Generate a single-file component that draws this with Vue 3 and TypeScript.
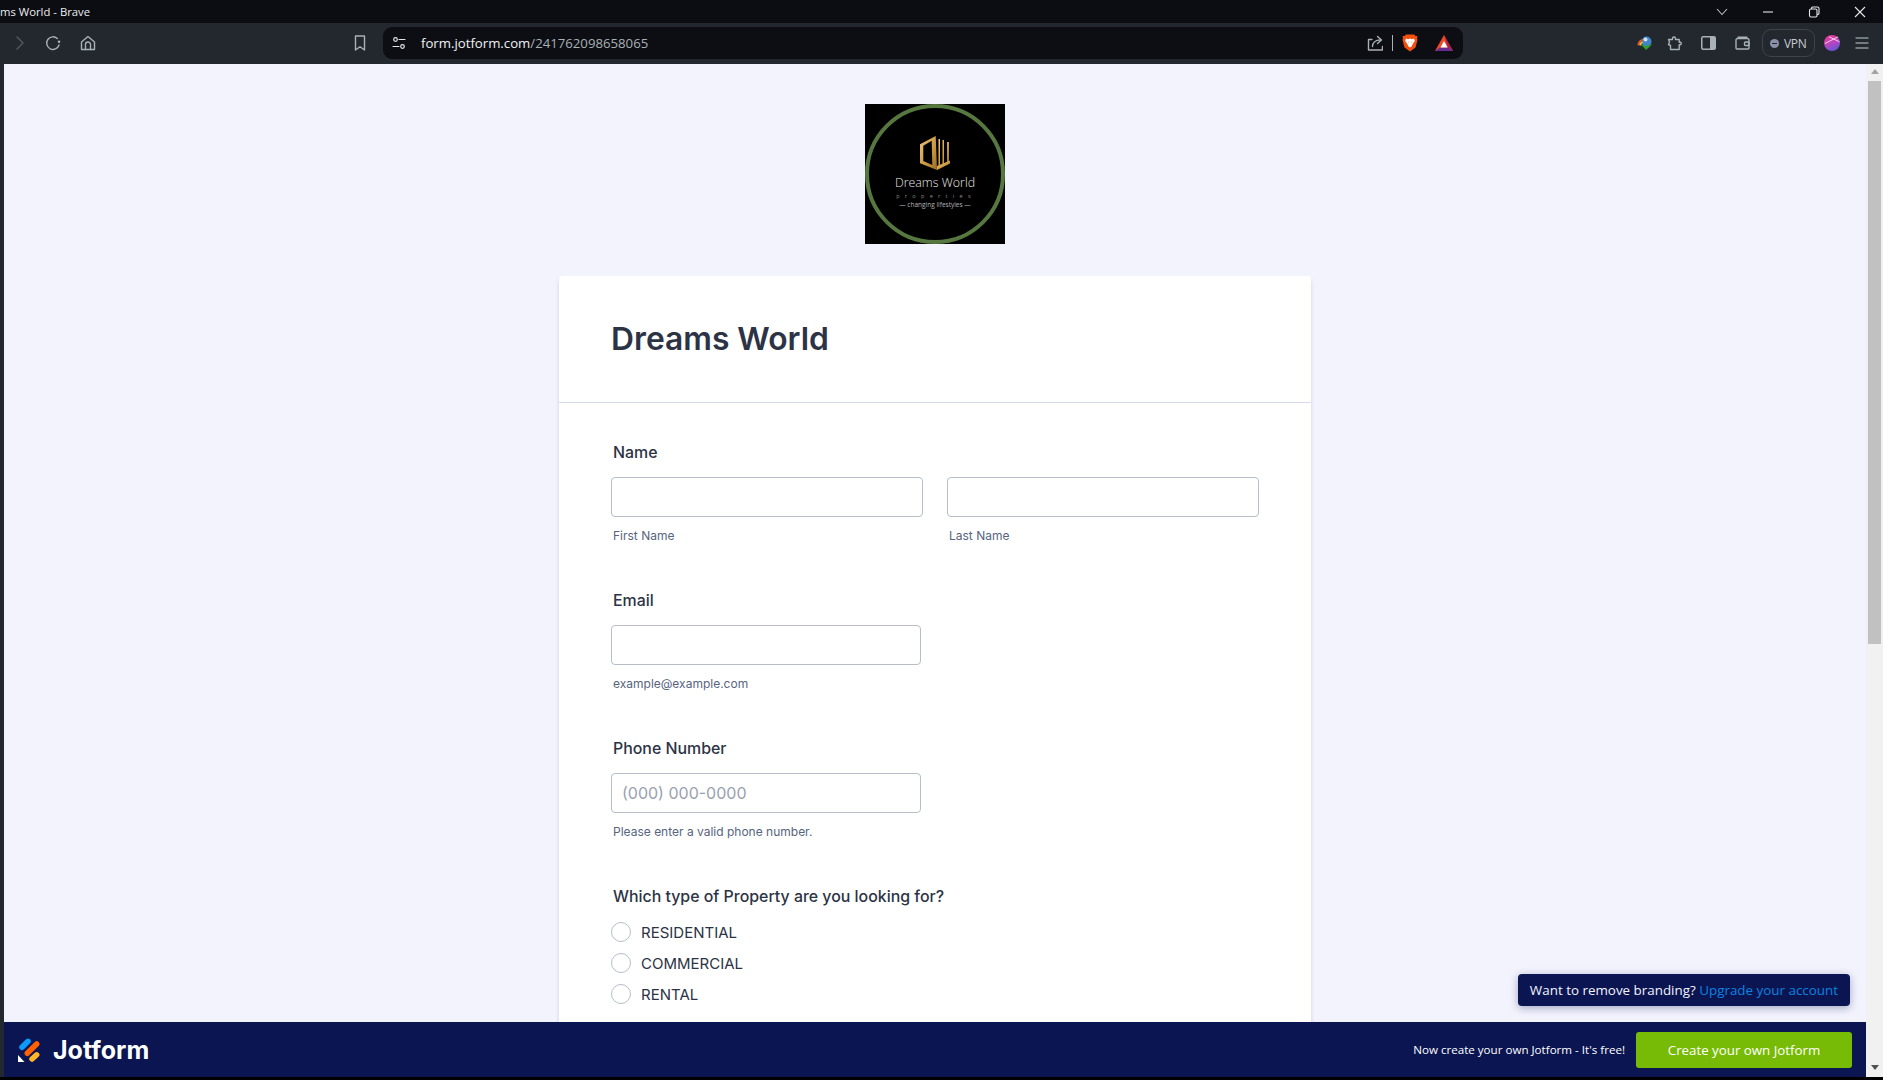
<template>
  <div class="window">
    <!-- Browser title bar -->
    <header class="titlebar">
      <span class="titlebar__title">ms World - Brave</span>
      <div class="titlebar__controls">
        <svg width="12" height="8" viewBox="0 0 12 8" class="ctl ctl--tabs"><path d="M1 1l5 5.500L11 1" /></svg>
        <svg width="12" height="12" viewBox="0 0 12 12" class="ctl"><path d="M1 6h10" /></svg>
        <svg width="12" height="12" viewBox="0 0 12 12" class="ctl"><rect x="1.500" y="3" width="7.500" height="8" rx="1.500" /><path d="M3.500 3V2.200Q3.500 1 4.700 1H9.500Q11 1 11 2.500V7.500Q11 8.500 9 8.500" /></svg>
        <svg width="12" height="12" viewBox="0 0 12 12" class="ctl"><path d="M1 1l10 10M11 1L1 11" /></svg>
      </div>
    </header>

    <!-- Browser toolbar -->
    <nav class="toolbar">
      <div class="toolbar__nav">
        <svg width="10" height="14" viewBox="0 0 10 14" class="ico ico--dim"><path d="M2 1l6 6-6 6" /></svg>
        <svg width="16" height="16" viewBox="0 0 16 16" class="ico"><path d="M12.300 3.500A6.300 6.300 0 1 0 14 10" /><circle cx="14" cy="6.800" r="1.300" fill="#a9b0b6" stroke="none" /></svg>
        <svg width="16" height="16" viewBox="0 0 16 16" class="ico"><path d="M1.500 14.500V7L8 1.500 14.500 7v7.500z" /><path d="M5.500 14.500V9.500a2.500 2.500 0 0 1 5 0v5" /></svg>
      </div>
      <svg width="12" height="16" viewBox="0 0 12 16" class="ico toolbar__bookmark"><path d="M1.500 1h9v14L6 11.800 1.500 15z" /></svg>
      <div class="urlbar">
        <svg width="14" height="14" viewBox="0 0 14 14" class="ico ico--light urlbar__tune"><circle cx="3.500" cy="3.500" r="1.800" /><path d="M7 3.500h6M1 10.500h6" /><circle cx="10.500" cy="10.500" r="1.800" /></svg>
        <span class="urlbar__url">form.jotform.com<span class="urlbar__path">/241762098658065</span></span>
        <div class="urlbar__end">
          <svg width="16" height="16" viewBox="0 0 16 16" class="ico"><path d="M5 4.500H1.500v10.500h14v-3.500" /><path d="M5.500 11.500C5.500 7.500 8.500 5 13.500 5" /><path d="M10.500 1.500L14.500 5l-4 3.500" /></svg>
          <span class="urlbar__sep"></span>
          <svg width="16" height="18" viewBox="0 0 16 18">
            <path d="M4 0.500h8l1.500 1.500 2 0-.5 2 .5 2-2 7.500-5.500 4-5.500-4-2-7.500.5-2-.5-2 2 0z" fill="#f1500f" />
            <path d="M4 4.500l2 .7 2-.7 2 .7 2-.7.800 2.500L11 9.500l-1.500 3L8 13.500l-1.500-1L5 9.500 3.200 7z" fill="#fff" />
            <path d="M5.500 7.500l1.500.4v.8zM10.500 7.500L9 7.900v.8z" fill="#f1500f" />
          </svg>
          <svg width="18" height="16" viewBox="0 0 18 16" class="urlbar__bat">
            <path d="M9 0L18 16H0z" fill="#ef4a24" />
            <path d="M9 0L18 16l-5-3.500z" fill="#a3204f" />
            <path d="M0 16l5-3.500h8L18 16z" fill="#662d91" />
            <path d="M9 6l3.500 6.500h-7z" fill="#fff" />
          </svg>
        </div>
      </div>
      <div class="ext">
        <svg width="16" height="14" viewBox="0 0 16 14" class="ext__idm">
          <circle cx="9.500" cy="5.500" r="5" fill="#3f86c9" />
          <circle cx="8.500" cy="3.500" r="2" fill="#cfe3f2" />
          <path d="M0.500 9.500a6 6 0 0 1 5-6.500l1 1.500a4 4 0 0 0-3.500 4.500z" fill="#e4572e" />
          <path d="M2.500 9.500a4 4 0 0 1 2.500-4l1 1a3 3 0 0 0-1.500 3z" fill="#e8c53a" />
          <path d="M4 8.500l6 1.500 5.500-2L9 14z" fill="#32a02c" />
        </svg>
        <svg width="16" height="15" viewBox="0 0 16 15" class="ico ext__puzzle"><path d="M1.500 3.500H5.500V2.500a1.500 1.500 0 0 1 3 0V3.500H12.200V6.200H13.500a1.500 1.500 0 0 1 0 2.600H12.200V13.500H3.500V9.500L1.500 8.500l1-2.500z" /></svg>
        <svg width="15" height="14" viewBox="0 0 15 14" class="ext__panel"><rect x="0.750" y="0.750" width="13.500" height="12.500" rx="1.500" fill="none" stroke="#a9b0b6" stroke-width="1.500" /><rect x="9" y="1" width="5.500" height="12" fill="#a9b0b6" /></svg>
        <svg width="15" height="14" viewBox="0 0 15 14" class="ico ext__wallet"><path d="M3 1.200h9M1 4a1.500 1.500 0 0 1 1.500-1.500h10A1.500 1.500 0 0 1 14 4v8a1 1 0 0 1-1 1H2a1 1 0 0 1-1-1z" /><rect x="9.500" y="6" width="4.500" height="3.500" rx="1" /></svg>
        <div class="vpn">
          <span class="vpn__dot"></span>
          <span>VPN</span>
        </div>
        <svg width="16" height="16" viewBox="0 0 16 16" class="ext__avatar">
          <defs>
            <linearGradient id="avatarGrad" x1="0.300" y1="0" x2="0.700" y2="1">
              <stop offset="0" stop-color="#ee3a94" />
              <stop offset="0.550" stop-color="#b046c4" />
              <stop offset="1" stop-color="#5b58d8" />
            </linearGradient>
          </defs>
          <circle cx="8" cy="8" r="8" fill="url(#avatarGrad)" />
          <path d="M1 8.500L14 1.800M5 1.800L15.500 6.800" fill="none" stroke="#f8dcec" stroke-width="0.900" />
        </svg>
        <svg width="14" height="12" viewBox="0 0 14 12" class="ico ico--flat ext__menu"><path d="M0.500 1h13M0.500 6h13M0.500 11h13" /></svg>
      </div>
    </nav>

    <div class="viewport">
      <div class="page">
        <main class="page__scroll">
          <div class="logo">
            <svg viewBox="0 0 140 140" width="140" height="140">
              <rect width="140" height="140" fill="#000" />
              <circle cx="70" cy="70" r="68" fill="none" stroke="#56773f" stroke-width="4" />
              <defs>
                <linearGradient id="gold" x1="0" y1="0" x2="1" y2="1">
                  <stop offset="0" stop-color="#eec579" />
                  <stop offset="0.600" stop-color="#c8963f" />
                  <stop offset="1" stop-color="#9a6a22" />
                </linearGradient>
              </defs>
              <path d="M55 40.300L70.700 32 72 66 55 59.300zM58.300 41.700V57l9 4-.6-24.300z" fill="url(#gold)" fill-rule="evenodd" />
              <path d="M73.500 35H75V63.500H73.500zM77.500 36H79V61H77.500zM82 38h2V58.500H82z" fill="url(#gold)" />
              <path d="M72 66L85 59.500V56.500L72 62z" fill="url(#gold)" />
              <text x="70" y="83" class="logo__name">Dreams World</text>
              <text x="71" y="93.500" class="logo__sub">properties</text>
              <text x="70" y="102.500" class="logo__tag">— changing lifestyles —</text>
            </svg>
          </div>

          <section class="card">
            <div class="card__header">
              <h1 class="card__title">Dreams World</h1>
            </div>
            <form class="card__body" @submit.prevent>
              <div class="field">
                <label class="field__label">Name</label>
                <div class="field__row">
                  <div class="field__col">
                    <input class="field__input" type="text" />
                    <span class="field__sub">First Name</span>
                  </div>
                  <div class="field__col">
                    <input class="field__input" type="text" />
                    <span class="field__sub">Last Name</span>
                  </div>
                </div>
              </div>

              <div class="field">
                <label class="field__label">Email</label>
                <div class="field__col field__col--single">
                  <input class="field__input" type="text" />
                  <span class="field__sub">example@example.com</span>
                </div>
              </div>

              <div class="field">
                <label class="field__label">Phone Number</label>
                <div class="field__col field__col--single">
                  <input class="field__input" type="text" placeholder="(000) 000-0000" />
                  <span class="field__sub">Please enter a valid phone number.</span>
                </div>
              </div>

              <div class="field">
                <label class="field__label">Which type of Property are you looking for?</label>
                <div class="radios">
                  <div v-for="opt in propertyTypes" :key="opt" class="radio">
                    <span class="radio__mark"></span>
                    <span>{{ opt }}</span>
                  </div>
                </div>
              </div>
            </form>
          </section>
        </main>

        <div class="toast">
          <span class="toast__text">Want to remove branding?</span> <span class="toast__link">Upgrade your account</span>
        </div>

        <footer class="brandbar">
          <div class="brandbar__logo">
            <svg width="22" height="24" viewBox="0 0 22 24">
              <path d="M4 9.300L10 3.300" stroke="#0a9bff" stroke-width="5.500" stroke-linecap="round" />
              <path d="M9.300 15.300L18.700 6" stroke="#ff6100" stroke-width="5.500" stroke-linecap="round" />
              <path d="M14 21L18.700 16.800" stroke="#ffb629" stroke-width="5.500" stroke-linecap="round" />
              <path d="M0 17v7h6.500z" fill="#fff" />
            </svg>
            <span class="brandbar__name">Jotform</span>
          </div>
          <div class="brandbar__cta">
            <span class="brandbar__note">Now create your own Jotform - It's free!</span>
            <span class="brandbar__btn">Create your own Jotform</span>
          </div>
        </footer>
      </div>

      <!-- Fake page scrollbar -->
      <div class="scrollbar">
        <span class="scrollbar__up"></span>
        <span class="scrollbar__thumb"></span>
        <span class="scrollbar__down"></span>
      </div>
    </div>
    <div class="bottom-edge"></div>
  </div>
</template>

<script setup lang="ts">
const propertyTypes: string[] = ['RESIDENTIAL', 'COMMERCIAL', 'RENTAL'];
</script>

<style>
html,
body {
  margin: 0;
  overflow: hidden;
  background: #22282e;
}
</style>

<style scoped>
.window {
  display: flex;
  flex-direction: column;
  width: 1883px;
  height: 1080px;
  overflow: hidden;
  font-family: Inter, 'Liberation Sans', sans-serif;
  background: #22282e;
}

.titlebar {
  display: flex;
  align-items: center;
  justify-content: space-between;
  height: 23px;
  flex: none;
  background: #0b0d13;
  color: #eceef0;
  font-family: 'Open Sans', 'Liberation Sans', sans-serif;
  font-size: 11.300px;
}

.titlebar__controls {
  display: flex;
  align-items: center;
  gap: 34px;
  padding-right: 17px;
}

.ctl {
  fill: none;
  stroke: #e6e8ea;
  stroke-width: 1.100;
}

.ctl--tabs {
  stroke: #b9bdc2;
}

.toolbar {
  display: flex;
  align-items: center;
  height: 41px;
  box-sizing: border-box;
  padding-bottom: 1px;
  flex: none;
  background: #22282e;
}

.ico {
  fill: none;
  stroke: #a9b0b6;
  stroke-width: 1.400;
  stroke-linecap: round;
  stroke-linejoin: round;
}

.ico--dim {
  stroke: #545b61;
}

.ico--light {
  stroke: #e4e6e8;
  stroke-width: 1.200;
}

.ico--flat {
  stroke: #8e959b;
  stroke-linecap: butt;
}

.toolbar__nav {
  display: flex;
  align-items: center;
  gap: 19.500px;
  width: 354px;
  padding-left: 15px;
  box-sizing: border-box;
}

.toolbar__bookmark {
  margin-right: 17px;
}

.urlbar {
  display: flex;
  align-items: center;
  width: 1080px;
  height: 32px;
  box-sizing: border-box;
  padding: 0 10px 0 9px;
  border-radius: 9px;
  background: #0c0e13;
}

.urlbar__tune {
  margin-right: 15px;
}

.urlbar__url {
  color: #f1f2f4;
  font-family: 'Open Sans', 'Liberation Sans', sans-serif;
  font-size: 13.200px;
}

.urlbar__path {
  color: #a9b0b6;
}

.urlbar__end {
  display: flex;
  align-items: center;
  gap: 9px;
  margin-left: auto;
}

.urlbar__bat {
  margin-left: 8px;
}

.urlbar__sep {
  width: 1px;
  height: 16px;
  background: #a9b0b6;
}

.ext {
  display: flex;
  align-items: center;
  margin-left: 174px;
}

.ext__puzzle {
  margin-left: 14px;
}

.ext__panel {
  margin-left: 18px;
}

.ext__wallet {
  margin-left: 19px;
}

.ext__avatar {
  margin-left: 9px;
}

.ext__menu {
  margin-left: 15px;
}

.vpn {
  display: flex;
  align-items: center;
  gap: 5px;
  width: 53px;
  height: 28px;
  box-sizing: border-box;
  margin-left: 12px;
  padding-left: 7px;
  border: 1px solid #3c4349;
  border-radius: 9px;
  color: #c8ccd0;
  font-family: 'Open Sans', 'Liberation Sans', sans-serif;
  font-size: 12px;
  letter-spacing: -0.300px;
}

.vpn__dot {
  position: relative;
  flex: none;
  width: 9px;
  height: 9px;
  border-radius: 50%;
  background: #8b90a8;
}

.vpn__dot::after {
  content: '';
  position: absolute;
  top: 4px;
  left: 2px;
  width: 5px;
  height: 1px;
  background: #22282e;
}

.viewport {
  display: flex;
  flex: 1;
  min-height: 0;
  padding-left: 4px;
}

.page {
  position: relative;
  display: flex;
  flex-direction: column;
  flex: 1;
  min-width: 0;
  background: #f3f3fe;
}

.page__scroll {
  flex: 1;
  min-height: 0;
  overflow: hidden;
  padding-top: 40px;
}

.logo {
  display: flex;
  justify-content: center;
  margin-bottom: 32px;
}

.logo__name {
  fill: #e8e8e8;
  font-family: 'Open Sans', sans-serif;
  font-size: 12.400px;
  font-weight: 300;
  text-anchor: middle;
}

.logo__sub {
  fill: #8a8a8a;
  font-family: 'Open Sans', sans-serif;
  font-size: 5.500px;
  letter-spacing: 5.300px;
  text-anchor: middle;
}

.logo__tag {
  fill: #b4b4b4;
  font-family: 'Open Sans', sans-serif;
  font-size: 6.500px;
  text-anchor: middle;
}

.card {
  width: 752px;
  min-height: 1000px;
  margin: 0 auto;
  border-radius: 3px 3px 0 0;
  background: #fff;
  box-shadow: 0 4px 4px rgba(87, 100, 126, 0.21);
}

.card__header {
  padding: 44px 52px 0;
  height: 127px;
  box-sizing: border-box;
  border-bottom: 1px solid #d8dae9;
}

.card__title {
  margin: 0;
  color: #2c3345;
  font-size: 31.800px;
  font-weight: 600;
  line-height: 38px;
}

.card__body {
  display: flex;
  flex-direction: column;
  gap: 47px;
  padding: 40px 52px 0;
}

.field__label {
  display: block;
  margin-bottom: 14px;
  padding-left: 2px;
  color: #2c3345;
  font-size: 15.900px;
  font-weight: 450;
  line-height: 20px;
}

.field__row {
  display: flex;
  gap: 24px;
}

.field__col {
  display: flex;
  flex-direction: column;
  width: 312px;
}

.field__col--single {
  width: 310px;
}

.field__input {
  height: 40px;
  box-sizing: border-box;
  padding: 0 10px;
  border: 1px solid #b8bdc9;
  border-radius: 4px;
  background: #fff;
  color: #2c3345;
  font-family: inherit;
  font-size: 16px;
}

.field__input::placeholder {
  color: #9a9fb0;
  opacity: 1;
}

.field__sub {
  margin-top: 11px;
  padding-left: 2px;
  color: #57647e;
  font-size: 12px;
  line-height: 16px;
}

.radios {
  display: flex;
  flex-direction: column;
  gap: 9px;
}

.radio {
  display: flex;
  align-items: center;
  gap: 10px;
  height: 22px;
  color: #2c3345;
  font-size: 15px;
}

.radio__mark {
  width: 20px;
  height: 20px;
  box-sizing: border-box;
  border: 1px solid #b8bdc9;
  border-radius: 50%;
  background: #fff;
}

.toast {
  position: absolute;
  right: 16px;
  bottom: 71px;
  height: 32px;
  padding: 0 12px;
  border-radius: 4px;
  background: #0a1551;
  box-shadow: 0 2px 8px rgba(10, 21, 81, 0.35);
  color: #f3f3fe;
  font-family: 'Open Sans', 'Liberation Sans', sans-serif;
  font-size: 13.400px;
  line-height: 32px;
  white-space: nowrap;
}

.toast__text {
  font-weight: 500;
}

.toast__link {
  color: #0a84e0;
}

.brandbar {
  display: flex;
  align-items: center;
  justify-content: space-between;
  flex: none;
  height: 55px;
  padding: 0 14px 0 14px;
  background: #0a1551;
}

.brandbar__logo {
  display: flex;
  align-items: center;
  gap: 13px;
}

.brandbar__name {
  color: #fff;
  font-family: Inter, 'Liberation Sans', sans-serif;
  font-size: 25px;
  font-weight: 700;
}

.brandbar__cta {
  display: flex;
  align-items: center;
  gap: 11px;
}

.brandbar__note {
  color: #fff;
  font-family: 'Open Sans', 'Liberation Sans', sans-serif;
  font-size: 11.600px;
}

.brandbar__btn {
  width: 216px;
  height: 36px;
  border-radius: 3px;
  background: #78bb07;
  color: #fff;
  font-family: 'Open Sans', 'Liberation Sans', sans-serif;
  font-size: 13.300px;
  line-height: 36px;
  text-align: center;
}

.scrollbar {
  display: flex;
  flex-direction: column;
  align-items: center;
  flex: none;
  width: 17px;
  background: #f1f1f1;
}

.scrollbar__up,
.scrollbar__down {
  width: 0;
  height: 0;
  border: 4px solid transparent;
}

.scrollbar__up {
  margin-top: 5px;
  border-top: 0;
  border-bottom: 5px solid #a3a3a3;
}

.scrollbar__thumb {
  width: 13px;
  height: 563px;
  margin-top: 7px;
  background: #c1c1c1;
}

.scrollbar__down {
  margin-top: auto;
  margin-bottom: 7px;
  border-bottom: 0;
  border-top: 5px solid #505050;
}

.bottom-edge {
  flex: none;
  height: 3px;
  background: #000;
}
</style>
